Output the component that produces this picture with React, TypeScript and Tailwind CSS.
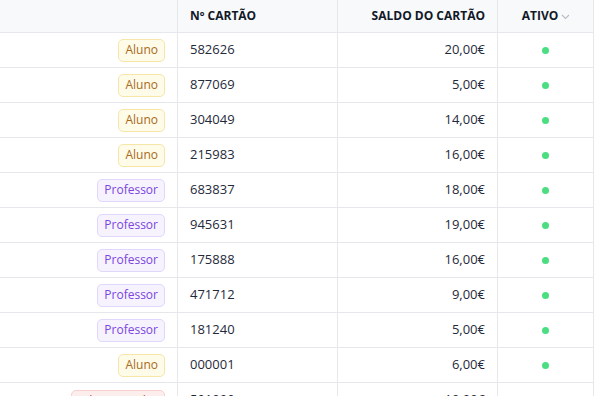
import React from "react";

type Row = { role: "Aluno" | "Professor" | "Outro"; card: string; saldo: string };

const rows: Row[] = [
  { role: "Aluno", card: "582626", saldo: "20,00€" },
  { role: "Aluno", card: "877069", saldo: "5,00€" },
  { role: "Aluno", card: "304049", saldo: "14,00€" },
  { role: "Aluno", card: "215983", saldo: "16,00€" },
  { role: "Professor", card: "683837", saldo: "18,00€" },
  { role: "Professor", card: "945631", saldo: "19,00€" },
  { role: "Professor", card: "175888", saldo: "16,00€" },
  { role: "Professor", card: "471712", saldo: "9,00€" },
  { role: "Professor", card: "181240", saldo: "5,00€" },
  { role: "Aluno", card: "000001", saldo: "6,00€" },
  { role: "Outro", card: "501099", saldo: "10,00€" },
];

function Badge({ role }: { role: Row["role"] }) {
  if (role === "Aluno")
    return (
      <span className="inline-flex h-[23px] items-center rounded-[5px] border border-[#f6e7a8] bg-[#fefbe8] px-[6px] text-[12px] text-[#a86a1c]">
        Aluno
      </span>
    );
  if (role === "Professor")
    return (
      <span className="inline-flex h-[23px] items-center rounded-[5px] border border-[#e0d7fb] bg-[#f6f3ff] px-[6px] text-[12px] text-[#7a45e0]">
        Professor
      </span>
    );
  return (
    <span className="mt-[2px] inline-flex h-[23px] items-center rounded-[5px] border border-[#f9cfcf] bg-[#fdeeee] px-[6px] text-[12px] text-[#c0392b]">
      Administrador
    </span>
  );
}

export default function App() {
  return (
    <div
      className="h-[396px] w-[594px] overflow-hidden bg-white text-[#1f2937]"
      style={{ fontFamily: '"Open Sans", "Noto Sans", sans-serif' }}
    >
      <div className="grid grid-cols-[178px_160px_160px_96px]">
        <div className="h-[33px] border-b border-r border-[#e5e7eb] bg-[#f8f9fb]" />
        <div className="flex h-[33px] items-center border-b border-r border-[#e5e7eb] bg-[#f8f9fb] pl-[12px] text-[12px] font-bold text-[#111827]">
          Nº CARTÃO
        </div>
        <div className="flex h-[33px] items-center justify-end border-b border-r border-[#e5e7eb] bg-[#f8f9fb] pr-[12px] text-[12px] font-bold text-[#111827]">
          SALDO DO CARTÃO
        </div>
        <div className="flex h-[33px] items-center justify-center gap-[3px] border-b border-r border-[#e5e7eb] bg-[#f8f9fb] pl-[1px] text-[12px] font-bold text-[#111827]">
          ATIVO
          <svg width="9" height="6" viewBox="0 0 9 6" className="mt-[1px]">
            <path d="M1 1 L4.5 4.5 L8 1" fill="none" stroke="#b8bcc4" strokeWidth="1.1" />
          </svg>
        </div>
        {rows.map((r, i) => (
          <React.Fragment key={i}>
            <div className="flex h-[35px] items-center justify-end border-b border-r border-[#e5e7eb] pr-[12px]">
              <Badge role={r.role} />
            </div>
            <div className="flex h-[35px] items-center border-b border-r border-[#e5e7eb] pl-[12px] text-[13px] text-[#1f2a3a]">
              {r.card}
            </div>
            <div className="flex h-[35px] items-center justify-end border-b border-r border-[#e5e7eb] pr-[12px] text-[13px] text-[#1f2a3a]">
              {r.saldo}
            </div>
            <div className="flex h-[35px] items-center justify-center border-b border-r border-[#e5e7eb]">
              {r.role !== "Outro" && <span className="h-[7px] w-[7px] rounded-full bg-[#4ade80]" />}
            </div>
          </React.Fragment>
        ))}
      </div>
    </div>
  );
}
